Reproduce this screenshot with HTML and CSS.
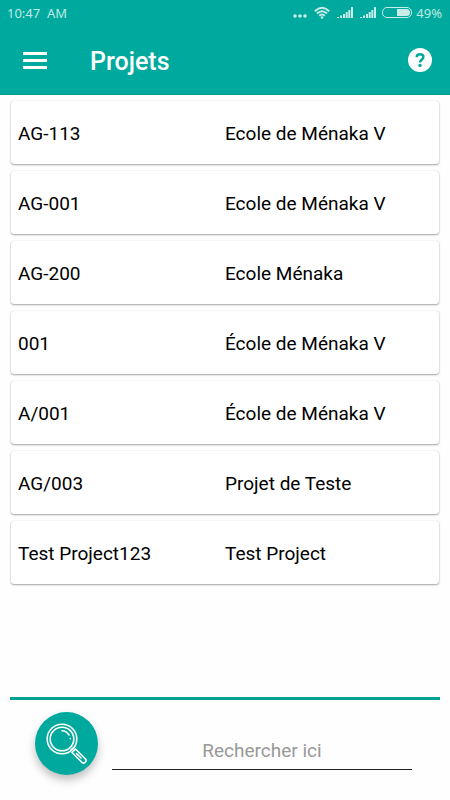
FILE: index.html
```html
<!DOCTYPE html>
<html lang="fr">
<head>
<meta charset="utf-8">
<meta name="viewport" content="width=device-width, initial-scale=1">
<title>Projets</title>
<link rel="stylesheet" href="styles.css">
</head>

<body>
  <header class="header">
    <div class="status-bar">
      <span class="status-time">10:47&nbsp; AM</span>
      <svg class="dots-icon" width="14" height="14" viewBox="0 0 14 14">
        <circle cx="2" cy="10" r="1.800"/><circle cx="7" cy="10" r="1.800"/><circle cx="12" cy="10" r="1.800"/>
      </svg>
      <svg class="wifi-icon" width="16" height="14" viewBox="0 0 16 14">
        <path d="M0.8 5.2Q8 -1.6 15.2 5.2M3 7.6Q8 3 13 7.6M5.2 9.8Q8 7.2 10.8 9.8"/>
        <circle cx="8" cy="11.5" r="1.3"/>
      </svg>
      <svg class="signal-icon" width="16" height="14" viewBox="0 0 16 14">
        <path d="M0 11h2v1h-2zM3 9.500h2v2.500h-2zM6 8h2v4h-2zM8.700 6h2v6h-2zM11.300 4h2v8h-2zM14 1h2v11h-2z"/>
      </svg>
      <svg class="signal-icon" width="16" height="14" viewBox="0 0 16 14">
        <path d="M0 11h2v1h-2zM3 9.500h2v2.500h-2zM6 8h2v4h-2zM8.700 6h2v6h-2zM11.300 4h2v8h-2zM14 1h2v11h-2z"/>
      </svg>
      <svg class="battery-icon" width="30" height="14" viewBox="0 0 30 14">
        <rect class="battery-case" x="0.5" y="1.5" width="29" height="10" rx="4.5"/>
        <path d="M15 3h9.500a3.500 3.500 0 0 1 0 7h-9.500z"/>
      </svg>
      <span class="status-battery">49%</span>
    </div>
    <div class="toolbar">
      <button class="menu-button" type="button" aria-label="Menu">
        <svg width="24" height="17" viewBox="0 0 24 17">
          <path d="M0 0h24v3h-24zM0 7h24v3h-24zM0 14h24v3h-24z"/>
        </svg>
      </button>
      <h1 class="title">Projets</h1>
      <button class="help-button" type="button" aria-label="Aide">
        <svg width="24" height="24" viewBox="0 0 24 24">
          <circle cx="12" cy="12" r="12"/>
          <path class="help-mark" d="M8.700 9.200C8.700 7.200 10.100 6.200 12 6.200s3.400 1 3.400 2.900c0 2.400-3.300 2.500-3.300 5.300"/>
          <circle class="help-dot" cx="12" cy="17.400" r="1.700"/>
        </svg>
      </button>
    </div>
  </header>

  <main class="projects">
    <ul class="project-list">
      <li class="project"><span>AG-113</span><span>Ecole de Ménaka V</span></li>
      <li class="project"><span>AG-001</span><span>Ecole de Ménaka V</span></li>
      <li class="project"><span>AG-200</span><span>Ecole Ménaka</span></li>
      <li class="project"><span>001</span><span>École de Ménaka V</span></li>
      <li class="project"><span>A/001</span><span>École de Ménaka V</span></li>
      <li class="project"><span>AG/003</span><span>Projet de Teste</span></li>
      <li class="project"><span>Test Project123</span><span>Test Project</span></li>
    </ul>
  </main>

  <form class="search">
    <button class="search-button" type="submit" aria-label="Rechercher">
      <svg width="42" height="42" viewBox="0 0 42 42">
        <circle cx="16" cy="16" r="14.800"/>
        <circle cx="16" cy="16" r="11.800"/>
        <path d="M16 7.800A8.200 8.200 0 0 1 23 12M24.300 15.500v.3"/>
        <path d="M25 27l2.500-2.500M26 29.500l3.500-3.500 10 10a2.500 2.500 0 0 1-3.500 3.500zM30.500 30.500l4.500 4.500"/>
      </svg>
    </button>
    <input class="search-input" type="text" placeholder="Rechercher ici" aria-label="Rechercher ici">
  </form>
</body>

</html>
```
FILE: styles.css
```css
* {
  box-sizing: border-box;
}
body {
  display: flex;
  flex-direction: column;
  min-height: 100vh;
  margin: 0;
  font-family: Roboto, sans-serif;
  font-size: 19px;
  color: #000;
  background-color: #fefefe;
}
button {
  padding: 0;
  border: none;
  background: none;
  cursor: pointer;
}
svg {
  display: block;
}

/* header */
.header {
  background-color: #00a99d;
  border-bottom: 1px solid #009b90;
}
.status-bar {
  display: flex;
  align-items: center;
  height: 26px;
  padding: 0 8px 0 7px;
  font-family: "Noto Sans", sans-serif;
  font-size: 13px;
  color: #bfe9e6;
  fill: #c8ece9;
}
.status-time {
  margin-right: auto;
}
.wifi-icon {
  margin-left: 7px;
}
.wifi-icon path {
  fill: none;
  stroke: #c8ece9;
  stroke-width: 2;
}
.signal-icon {
  margin-left: 7px;
}
.battery-icon {
  margin: 0 4px 0 6px;
}
.battery-case {
  fill: none;
  stroke: #c8ece9;
}
.toolbar {
  display: flex;
  align-items: center;
  height: 68px;
  padding: 0 18px 0 23px;
  fill: #fff;
}
.title {
  flex: 1;
  margin: 0 0 0 43px;
  padding-top: 3px;
  font-size: 25px;
  font-weight: 500;
  line-height: 30px;
  color: #fff;
}
.help-mark {
  fill: none;
  stroke: #00a99d;
  stroke-width: 2.5;
}
.help-dot {
  fill: #00a99d;
}

/* projects */
.projects {
  flex: 1;
  padding: 6px 11px;
}
.project-list {
  display: flex;
  flex-direction: column;
  gap: 7px;
  margin: 0;
  padding: 0;
  list-style: none;
}
.project {
  display: grid;
  grid-template-columns: 1fr 1fr;
  align-items: center;
  min-height: 63px;
  padding: 2px 7px 0;
  border-radius: 3px;
  background-color: #fff;
  box-shadow: 0 1px 2px rgba(0, 0, 0, 0.35), 0 0 1px rgba(0, 0, 0, 0.2);
}

/* search */
.search {
  display: flex;
  align-items: flex-start;
  gap: 14px;
  margin: 0 10px;
  padding: 12px 28px 25px 25px;
  border-top: 3px solid #00a194;
}
.search-button {
  display: flex;
  align-items: center;
  justify-content: center;
  flex-shrink: 0;
  width: 63px;
  height: 63px;
  border-radius: 50%;
  background-color: #00a99d;
  box-shadow: 0 5px 9px rgba(0, 0, 0, 0.25);
}
.search-button svg {
  fill: none;
  stroke: #fff;
  stroke-width: 1.6;
  stroke-linecap: round;
  stroke-linejoin: round;
}
.search-input {
  flex: 1;
  min-width: 0;
  height: 58px;
  padding: 20px 0 0;
  border: none;
  border-bottom: 1px solid #222;
  outline: none;
  background: none;
  font: inherit;
  text-align: center;
}
.search-input::placeholder {
  color: #999;
  opacity: 1;
}
```
